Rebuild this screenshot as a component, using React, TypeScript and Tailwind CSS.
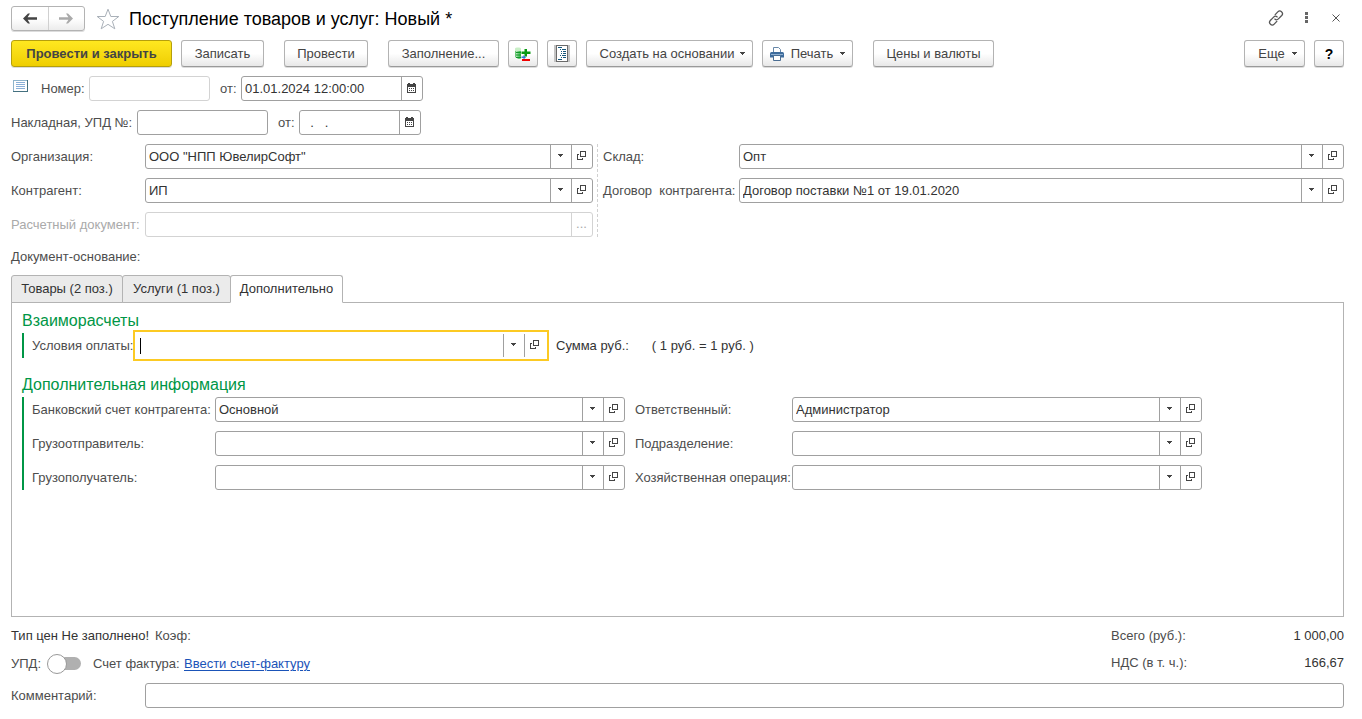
import React, { useState } from 'react';
import clsx from 'clsx';

const FONT = "font-['Liberation_Sans',Arial,sans-serif]";

function Caret() {
  return (
    <svg width="5" height="3" viewBox="0 0 5 3" shapeRendering="crispEdges" className="shrink-0">
      <path d="M0 0h5v1H4v1H3v1H2V2H1V1H0z" fill="#444" />
    </svg>
  );
}

function OpenIcon() {
  return (
    <svg width="9" height="9" viewBox="0 0 9 9" shapeRendering="crispEdges" fill="none" stroke="#444">
      <path d="M3.5 .5h5v5h-5z" />
      <path d="M2 3.5H.5v5h5V7" />
    </svg>
  );
}

function CalendarIcon() {
  return (
    <svg width="9" height="10" viewBox="0 0 9 10" shapeRendering="crispEdges" fill="#444">
      <path d="M1 0h2v1h3V0h2v1h1v9H0V1h1zM1 4v5h7V4z" fillRule="evenodd" />
      <path d="M2 5h1v1H2zM4 5h1v1H4zM6 5h1v1H6zM2 7h1v1H2zM4 7h1v1H4zM6 7h1v1H6z" />
    </svg>
  );
}

function ArrowIcon({ color, flip }: { color: string; flip?: boolean }) {
  return (
    <svg width="14" height="11" viewBox="0 0 14 11" className={clsx(flip && 'rotate-180')}>
      <path d="M0 5.5L5 .5h2L4.6 4.3H14v2.4H4.6L7 10.5H5z" fill={color} />
    </svg>
  );
}

function StarIcon() {
  return (
    <svg width="24" height="22" viewBox="0 0 24 22" fill="none" stroke="#a9b0b8">
      <path d="M12 1.2l2.8 7.3h8l-6.4 4.9 2.4 7.4L12 16.3l-6.8 4.5 2.4-7.4L1.2 8.5h8z" />
    </svg>
  );
}

function ChainIcon() {
  return (
    <svg width="16" height="16" viewBox="0 0 16 16" fill="none" stroke="#555" strokeWidth="1.3" strokeLinecap="round">
      <path d="M7.2 4.6l2.6-2.7c1-1 2.6-1.2 3.7-.2s1.2 2.7.2 3.8L10.400 8.900c-1 1-2.500 1.100-3.600.2" />
      <path d="M8.800 11.400l-2.600 2.700c-1 1-2.600 1.200-3.700.2s-1.200-2.700-.2-3.800l3.300-3.400c1-1 2.500-1.100 3.600-.2" />
    </svg>
  );
}

function ListIcon() {
  return (
    <svg width="15" height="12" viewBox="0 0 15 12" shapeRendering="crispEdges">
      <path d="M.5 .5h14v11H.5z" fill="#fff" stroke="#8fb4cb" />
      <path d="M14.5 0v11.5H0" fill="none" stroke="#44707f" />
      <path d="M3 2.5h9M3 4.5h9M3 6.5h9M3 8.5h9" stroke="#8bb0d8" />
    </svg>
  );
}

function StockIcon() {
  return (
    <svg width="16" height="14" viewBox="0 0 16 14">
      <path d="M0 1.500C0 .3 6 .3 6 1.500V4H0z" fill="#c9efc7" />
      <path d="M0 4h1.500v7L0 10z" fill="#6cc878" />
      <path d="M2.500 4h1v8l-1-.5z" fill="#16a52c" />
      <path d="M3.500 4H6v7.500l-2.500.5z" fill="#4cbf5c" />
      <path d="M1 5.500h5M1 8h5M1 10.500h5" stroke="#129a28" />
      <path d="M9.500 2H12v2.500h3.500V7H12v2.500H9.500V7H6.500V4.500h3z" fill="#0a9a12" />
      <path d="M6.500 9.500h2V8l2.500 2.300-2.500 2.200V11h-2z" fill="#2a79cf" />
      <path d="M7 12h8v2H7z" fill="#f00000" />
    </svg>
  );
}

function JournalIcon() {
  return (
    <svg width="16" height="17" viewBox="0 0 16 17" shapeRendering="crispEdges">
      <path d="M0 0h16v17H0z" fill="#c4c4c4" />
      <path d="M2.500 .5h11v16h-11z" fill="#fff" stroke="#6a6a6a" />
      <path d="M4 2.500h4M6 4.500h1M8 4.500h4M7 6.500h1M9 6.500h3M7 8.500h1M9 8.500h3M6 10.500h1M8 10.500h4M7 12.500h1M9 12.500h3M4 14.500h4" stroke="#15577c" />
    </svg>
  );
}

function PrinterIcon() {
  return (
    <svg width="14" height="14" viewBox="0 0 14 14">
      <path d="M3.500 5V.5h5l2 2V5" fill="#fff" stroke="#6787a8" />
      <path d="M1.500 5h11q1.500 0 1.500 1.500v4H0v-4Q0 5 1.500 5z" fill="#3d6b9c" />
      <path d="M1 7h12v1H1z" fill="#8fb0d2" />
      <path d="M3.500 8.500h7v5h-7z" fill="#fff" stroke="#4a6d92" />
    </svg>
  );
}

type ToolButtonProps = {
  children: React.ReactNode;
  className?: string;
  label?: string;
};

function ToolButton({ children, className, label }: ToolButtonProps) {
  return (
    <button
      type="button"
      aria-label={label}
      className={clsx(
        'flex h-[27px] shrink-0 items-center justify-center whitespace-nowrap rounded-[3px] border border-[#b3b3b3] border-b-[#9a9a9a] bg-linear-to-b from-white from-50% to-[#e8e8e8] text-[#444] shadow-[0_1px_0_#dcdcdc]',
        className
      )}
    >
      {children}
    </button>
  );
}

type FieldProps = {
  id: string;
  value?: string;
  kind?: 'text' | 'ref' | 'date' | 'dots';
  disabled?: boolean;
  focused?: boolean;
  className?: string;
};

function Field({ id, value = '', kind = 'ref', disabled, focused, className }: FieldProps) {
  const [text, setText] = useState(value);
  const line = disabled ? 'border-[#d3d3d3]' : 'border-[#a0a0a0]';
  const button = clsx('flex w-[21px] shrink-0 items-center justify-center border-l pr-px pb-0.5', line);

  return (
    <div
      className={clsx(
        'flex h-[25px] min-w-0 border bg-white',
        focused ? 'border-transparent outline-2 outline-offset-1 outline-[#fcca23]' : ['rounded-[3px]', line],
        className
      )}
    >
      {focused && <span className="ml-[3px] h-4 w-px shrink-0 self-center bg-black" />}
      <input
        id={id}
        type="text"
        value={text}
        disabled={disabled}
        onChange={e => setText(e.target.value)}
        className="w-full min-w-0 flex-1 bg-transparent px-[3px] text-[#333] outline-none"
      />
      {kind === 'ref' && (
        <>
          <button type="button" aria-label="Выбрать" className={button}><Caret /></button>
          <button type="button" aria-label="Открыть" className={button}><OpenIcon /></button>
        </>
      )}
      {kind === 'date' && <button type="button" aria-label="Календарь" className={button}><CalendarIcon /></button>}
      {kind === 'dots' && <button type="button" disabled={disabled} className={clsx(button, 'text-[#aaa]')}>...</button>}
    </div>
  );
}

function Label({ htmlFor, children, className }: { htmlFor: string; children: React.ReactNode; className?: string }) {
  return (
    <label htmlFor={htmlFor} className={clsx('shrink-0 whitespace-pre', className)}>
      {children}
    </label>
  );
}

const tabs = [
  { title: 'Товары (2 поз.)', width: 'w-28' },
  { title: 'Услуги (1 поз.)', width: 'w-[109px]' },
  { title: 'Дополнительно', width: 'w-[113px]' },
];

export default function App() {
  const [activeTab, setActiveTab] = useState(2);
  const [upd, setUpd] = useState(false);

  return (
    <div className={clsx('flex min-h-screen flex-col bg-white pt-1.5 pr-[18px] pb-[11px] pl-[11px] text-[13px] leading-4 text-[#4d4d4d]', FONT)}>
      {/* Title */}
      <header className="flex h-[25px] items-center">
        <div className="flex h-[25px] w-[74px] rounded-[3px] border border-[#b3b3b3] bg-linear-to-b from-white from-50% to-[#ececec] shadow-[0_1px_0_#dcdcdc]">
          <button type="button" aria-label="Назад" className="flex flex-1 items-center justify-center border-r border-[#d0d0d0]">
            <ArrowIcon color="#444" />
          </button>
          <button type="button" aria-label="Вперед" className="flex flex-1 items-center justify-center">
            <ArrowIcon color="#aaa" flip />
          </button>
        </div>
        <button type="button" aria-label="В избранное" className="ml-[11px]"><StarIcon /></button>
        <h1 className="ml-[9px] text-lg leading-6 text-black">Поступление товаров и услуг: Новый *</h1>
        <div className="ml-auto flex items-center pb-0.5">
          <button type="button" aria-label="Получить ссылку"><ChainIcon /></button>
          <button type="button" aria-label="Меню" className="ml-[21px]">
            <svg width="3" height="11" viewBox="0 0 3 11" fill="#666">
              <path d="M0 0h3v3H0zM0 4h3v3H0zM0 8h3v3H0z" />
            </svg>
          </button>
          <button type="button" aria-label="Закрыть" className="mr-1 ml-6">
            <svg width="8" height="8" viewBox="0 0 8 8" stroke="#555" fill="none">
              <path d="M.5 .5l7 7M7.500 .5l-7 7" />
            </svg>
          </button>
        </div>
      </header>

      {/* Command bar */}
      <div className="mt-[9px] flex gap-[9px]">
        <button type="button" className="h-[27px] w-[161px] shrink-0 whitespace-nowrap rounded-[3px] border border-[#b59f0c] bg-linear-to-b from-[#ffe81f] to-[#efce00] font-bold text-[#444] shadow-[0_1px_0_#dcdcdc]">
          Провести и закрыть
        </button>
        <ToolButton className="w-[83px]">Записать</ToolButton>
        <ToolButton className="ml-[11px] w-[84px]">Провести</ToolButton>
        <ToolButton className="ml-[11px] w-[111px]">Заполнение...</ToolButton>
        <ToolButton className="w-[30px]" label="Подбор"><StockIcon /></ToolButton>
        <ToolButton className="w-[30px]" label="Журнал"><JournalIcon /></ToolButton>
        <ToolButton className="w-[167px] gap-1.5 pl-1.5">Создать на основании <Caret /></ToolButton>
        <ToolButton className="w-[91px] gap-[7px]"><PrinterIcon />Печать <Caret /></ToolButton>
        <ToolButton className="ml-[11px] w-[121px]">Цены и валюты</ToolButton>
        <ToolButton className="ml-auto w-[61px] gap-[7px] pl-1.5">Еще <Caret /></ToolButton>
        <ToolButton className="w-[30px] text-sm font-bold text-black">?</ToolButton>
      </div>

      {/* Document number and dates */}
      <div className="mt-[9px] flex items-center">
        <span className="ml-0.5 pb-1.5"><ListIcon /></span>
        <Label htmlFor="number" className="ml-[13px] w-12">Номер:</Label>
        <Field id="number" kind="text" disabled className="w-[121px]" />
        <Label htmlFor="date" className="ml-2.5 w-[21px]">от:</Label>
        <Field id="date" kind="date" value="01.01.2024 12:00:00" className="w-[182px]" />
      </div>
      <div className="mt-[9px] flex items-center">
        <Label htmlFor="invoice" className="w-[126px]">Накладная, УПД №:</Label>
        <Field id="invoice" kind="text" className="w-[131px]" />
        <Label htmlFor="invoice-date" className="ml-2.5 w-[21px]">от:</Label>
        <Field id="invoice-date" kind="date" value="  .   ." className="w-[122px]" />
      </div>

      {/* Parties */}
      <div className="mt-[9px] grid grid-cols-[582fr_747fr] gap-1">
        <div className="flex flex-col gap-[9px]">
          <div className="flex items-center">
            <Label htmlFor="company" className="w-[134px]">Организация:</Label>
            <Field id="company" value={'ООО "НПП ЮвелирСофт"'} className="flex-1" />
          </div>
          <div className="flex items-center">
            <Label htmlFor="partner" className="w-[134px]">Контрагент:</Label>
            <Field id="partner" value="ИП" className="flex-1" />
          </div>
          <div className="flex items-center">
            <Label htmlFor="settlement" className="w-[134px] text-[#aaa]">Расчетный документ:</Label>
            <Field id="settlement" kind="dots" disabled className="flex-1" />
          </div>
        </div>
        <div className="flex flex-col gap-[9px] border-l border-dashed border-[#d0d0d0] pl-[5px]">
          <div className="flex items-center">
            <Label htmlFor="warehouse" className="w-[136px]">Склад:</Label>
            <Field id="warehouse" value="Опт" className="flex-1" />
          </div>
          <div className="flex items-center">
            <Label htmlFor="contract" className="w-[136px]">Договор  контрагента:</Label>
            <Field id="contract" value="Договор поставки №1 от 19.01.2020" className="flex-1" />
          </div>
        </div>
      </div>

      <div className="mt-3">Документ-основание:</div>

      {/* Tabs */}
      <div role="tablist" className="z-10 mt-2.5 flex">
        {tabs.map((tab, idx) => (
          <button
            key={tab.title}
            type="button"
            role="tab"
            aria-selected={idx === activeTab}
            onClick={() => setActiveTab(idx)}
            className={clsx(
              'h-7 whitespace-nowrap rounded-t-[3px] border border-[#b3b3b3] text-[#333]',
              tab.width,
              idx > 0 && '-ml-px',
              idx === activeTab ? 'border-b-white bg-white' : 'bg-[#ebebeb]'
            )}
          >
            {tab.title}
          </button>
        ))}
      </div>
      <div role="tabpanel" className="-mt-px flex-1 border border-[#b3b3b3] px-2.5 pt-2">
        <h2 className="text-base leading-5 text-[#009646]">Взаиморасчеты</h2>
        <div className="mt-0.5 flex items-center border-l-2 border-[#009646] pl-2">
          <Label htmlFor="terms" className="w-[104px]">Условия оплаты:</Label>
          <Field id="terms" focused className="w-[410px]" />
          <span className="ml-2.5 text-[#333]">Сумма руб.:</span>
          <span className="ml-[23px] text-[#333]">( 1 руб. = 1 руб. )</span>
        </div>

        <h2 className="mt-[17px] text-base leading-5 text-[#009646]">Дополнительная информация</h2>
        <div className="mt-0.5 grid grid-cols-[183px_minmax(0,410px)_167px_minmax(0,410px)] items-center gap-y-[9px] border-l-2 border-[#009646] pl-2">
          <Label htmlFor="bank">Банковский счет контрагента:</Label>
          <Field id="bank" value="Основной" />
          <Label htmlFor="manager" className="pl-2.5">Ответственный:</Label>
          <Field id="manager" value="Администратор" />
          <Label htmlFor="shipper">Грузоотправитель:</Label>
          <Field id="shipper" />
          <Label htmlFor="department" className="pl-2.5">Подразделение:</Label>
          <Field id="department" />
          <Label htmlFor="consignee">Грузополучатель:</Label>
          <Field id="consignee" />
          <Label htmlFor="operation" className="pl-2.5">Хозяйственная операция:</Label>
          <Field id="operation" />
        </div>
      </div>

      {/* Footer */}
      <footer className="mt-[9px]">
        <div className="flex justify-between">
          <div className="flex flex-col gap-2">
            <div className="flex h-5 items-center gap-1.5">
              <span className="text-[#333]">Тип цен Не заполнено!</span>
              <span>Коэф:</span>
            </div>
            <div className="flex h-5 items-center">
              <Label htmlFor="upd" className="w-9">УПД:</Label>
              <input
                id="upd"
                type="checkbox"
                role="switch"
                checked={upd}
                onChange={e => setUpd(e.target.checked)}
                className="relative h-5 w-[34px] shrink-0 appearance-none before:absolute before:top-[3px] before:right-0 before:left-1 before:h-[13px] before:rounded-full before:bg-[#b0b0b0] after:absolute after:top-0 after:left-0 after:size-5 after:rounded-full after:border after:border-[#999] after:bg-white checked:after:left-3.5"
              />
              <span className="ml-3 w-[91px] whitespace-nowrap">Счет фактура:</span>
              <a href="#invoice" className="whitespace-nowrap text-[#1a53b8] underline underline-offset-2">Ввести счет-фактуру</a>
            </div>
          </div>
          <dl className="grid w-[233px] grid-cols-2 content-start gap-y-[7px]">
            <dt className="flex h-5 items-center">Всего (руб.):</dt>
            <dd className="flex h-5 items-center justify-end text-[#333]">1 000,00</dd>
            <dt className="flex h-5 items-center">НДС (в т. ч.):</dt>
            <dd className="flex h-5 items-center justify-end text-[#333]">166,67</dd>
          </dl>
        </div>
        <div className="mt-[9px] flex items-center">
          <Label htmlFor="comment" className="w-[134px]">Комментарий:</Label>
          <Field id="comment" kind="text" className="flex-1" />
        </div>
      </footer>
    </div>
  );
}
